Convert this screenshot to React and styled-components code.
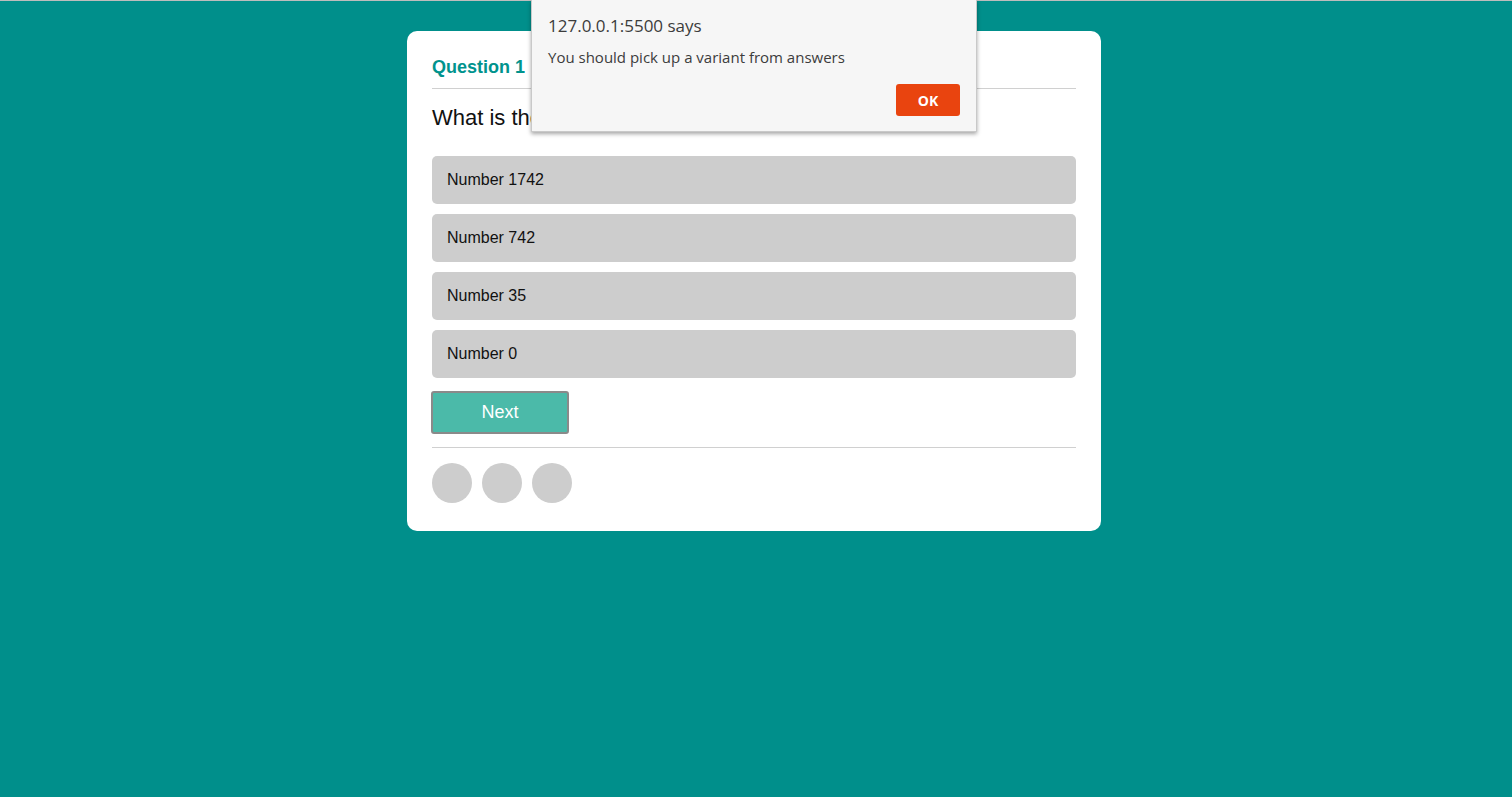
import React from "react";
import styled, { createGlobalStyle } from "styled-components";

const Global = createGlobalStyle`
  html, body { margin: 0; padding: 0; }
  body {
    background: #008f8b;
    min-height: 797px;
    border-top: 1px solid #bdbdbd;
    box-sizing: border-box;
    font-family: "Liberation Sans", Arial, sans-serif;
  }
`;

const Page = styled.div`
  display: flex;
  justify-content: center;
  padding-top: 30px;
  padding-right: 4px;
`;

const Card = styled.div`
  width: 694px;
  box-sizing: border-box;
  background: #fff;
  border-radius: 10px;
  padding: 25px 25px 28px;
`;

const Heading = styled.div`
  color: #00938d;
  font-weight: bold;
  font-size: 18px;
  line-height: 22px;
  padding-bottom: 10px;
  border-bottom: 1px solid #d0d0d0;
`;

const QuestionText = styled.div`
  font-size: 22px;
  line-height: 26px;
  color: #111;
  margin: 16px 0 25px;
`;

const Answers = styled.div`
  display: flex;
  flex-direction: column;
  gap: 10px;
`;

const Answer = styled.div`
  height: 48px;
  box-sizing: border-box;
  background: #cdcdcd;
  border-radius: 5px;
  padding: 0 15px;
  display: flex;
  align-items: center;
  font-size: 16px;
  color: #111;
`;

const NextButton = styled.button`
  margin: 13px 0 0 -1px;
  width: 138px;
  height: 43px;
  background: #4bbaa9;
  border: 2px solid #8a8a8a;
  border-radius: 3px;
  color: #fff;
  font-family: "Liberation Sans", Arial, sans-serif;
  font-size: 18px;
`;

const Footer = styled.div`
  margin-top: 13px;
  border-top: 1px solid #d0d0d0;
  padding-top: 15px;
  display: flex;
  gap: 10px;
`;

const Dot = styled.div`
  width: 40px;
  height: 40px;
  border-radius: 50%;
  background: #cdcdcd;
`;

const Dialog = styled.div`
  position: absolute;
  left: 531px;
  top: 0;
  width: 446px;
  height: 132px;
  box-sizing: border-box;
  background: #f6f6f6;
  border: 1px solid #c9c9c9;
  border-top: none;
  box-shadow: 0 2px 4px rgba(0, 0, 0, 0.35);
  padding: 15px 16px 0 16px;
  font-family: "Open Sans", "DejaVu Sans", sans-serif;
  color: #3c3c3c;
`;

const DialogTitle = styled.div`
  font-size: 17px;
  line-height: 22px;
`;

const DialogMessage = styled.div`
  font-size: 15px;
  line-height: 20px;
  margin-top: 10px;
`;

const DialogActions = styled.div`
  display: flex;
  justify-content: flex-end;
  margin-top: 17px;
`;

const OkButton = styled.button`
  width: 64px;
  height: 32px;
  background: #e9440f;
  border: none;
  border-radius: 3px;
  color: #fff;
  font-family: "Open Sans", "DejaVu Sans", sans-serif;
  font-weight: bold;
  font-size: 14px;
`;

export default function App() {
  const answers = ["Number 1742", "Number 742", "Number 35", "Number 0"];
  return (
    <>
      <Global />
      <Page>
        <Card>
          <Heading>Question 1</Heading>
          <QuestionText>What is the answer to this question?</QuestionText>
          <Answers>
            {answers.map((a) => (
              <Answer key={a}>{a}</Answer>
            ))}
          </Answers>
          <NextButton>Next</NextButton>
          <Footer>
            <Dot />
            <Dot />
            <Dot />
          </Footer>
        </Card>
      </Page>
      <Dialog>
        <DialogTitle>127.0.0.1:5500 says</DialogTitle>
        <DialogMessage>You should pick up a variant from answers</DialogMessage>
        <DialogActions>
          <OkButton>OK</OkButton>
        </DialogActions>
      </Dialog>
    </>
  );
}
